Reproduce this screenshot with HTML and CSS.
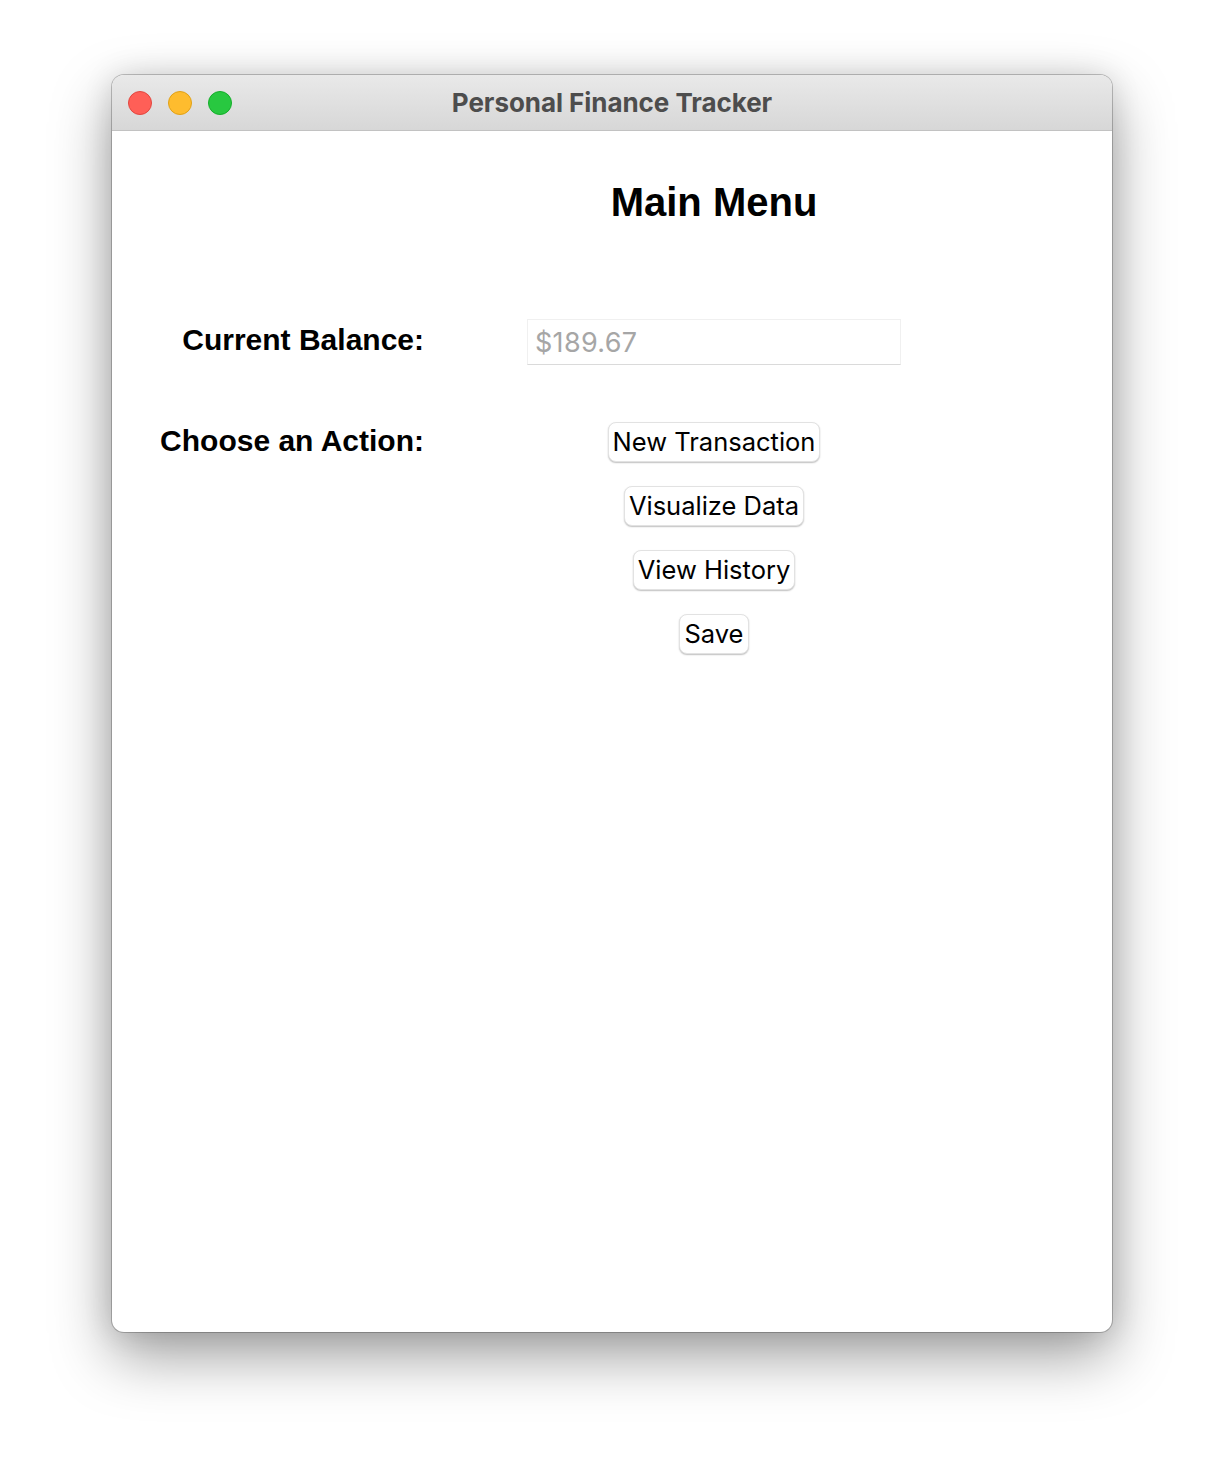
FILE: index.html
```html
<!DOCTYPE html>
<html lang="en">
<head>
<meta charset="utf-8">
<title>Personal Finance Tracker</title>
<link rel="stylesheet" href="styles.css">
</head>
<body>
<div class="window">
  <header class="titlebar">
    <div class="lights">
      <span class="light red"></span>
      <span class="light yellow"></span>
      <span class="light green"></span>
    </div>
    <div class="title">Personal Finance Tracker</div>
    <div class="spacer"></div>
  </header>
  <main class="content">
    <div class="grid">
      <div class="cell"></div>
      <h1 class="heading">Main Menu</h1>
      <div class="label balance-label">Current Balance:</div>
      <div class="field-wrap"><div class="field">$189.67</div></div>
      <div class="label action-label">Choose an Action:</div>
      <div class="actions">
        <button class="btn">New Transaction</button>
        <button class="btn">Visualize Data</button>
        <button class="btn">View History</button>
        <button class="btn">Save</button>
      </div>
    </div>
  </main>
</div>
</body>
</html>
```
FILE: styles.css
```css
html, body {
  margin: 0;
  padding: 0;
  background: #ffffff;
}
body {
  width: 1224px;
  height: 1480px;
  overflow: hidden;
}
.window {
  margin: 75px 0 0 112px;
  width: 1000px;
  height: 1257px;
  border-radius: 12px;
  overflow: hidden;
  background: #ffffff;
  box-shadow: 0 0 0 1px rgba(0,0,0,0.22), 0 24px 60px rgba(0,0,0,0.38), 0 0 30px rgba(0,0,0,0.12);
  display: flex;
  flex-direction: column;
}
.titlebar {
  height: 55px;
  border-bottom: 1px solid #c2c2c2;
  background: linear-gradient(#e9e9e9, #d7d7d7);
  display: grid;
  grid-template-columns: 1fr auto 1fr;
  align-items: center;
  flex-shrink: 0;
}
.lights {
  display: flex;
  gap: 16px;
  padding-left: 16px;
}
.light {
  width: 24px;
  height: 24px;
  border-radius: 50%;
  box-sizing: border-box;
}
.red { background: #ff5f57; border: 1px solid #e2463f; }
.yellow { background: #febc2e; border: 1px solid #e1a116; }
.green { background: #28c840; border: 1px solid #14ae2a; }
.title {
  font-family: Inter, "Noto Sans", sans-serif;
  font-weight: 700;
  font-size: 26px;
  color: #4d4d4d;
  letter-spacing: -0.05px;
}
.content {
  flex: 1;
  padding-top: 49px;
}
.grid {
  display: grid;
  grid-template-columns: 300px 374px;
  column-gap: 103px;
  padding-left: 12px;
  align-items: start;
}
.heading {
  margin: 0;
  font-family: "Liberation Sans", Arial, sans-serif;
  font-weight: 700;
  font-size: 40px;
  line-height: 44px;
  text-align: center;
  color: #000;
  margin-bottom: 95px;
}
.label {
  font-family: "Liberation Sans", Arial, sans-serif;
  font-weight: 700;
  font-size: 30px;
  color: #000;
  text-align: right;
}
.balance-label {
  line-height: 42px;
}
.action-label {
  line-height: 37px;
}
.field-wrap {
  margin-bottom: 57px;
}
.field {
  height: 46px;
  box-sizing: border-box;
  border: 1px solid #f0f0f0;
  border-bottom: 1px solid #dadada;
  padding-left: 7px;
  font-family: Inter, "Noto Sans", sans-serif;
  font-size: 27px;
  letter-spacing: 0.3px;
  line-height: 46px;
  color: #a6a6a6;
}
.actions {
  display: flex;
  flex-direction: column;
  align-items: center;
  gap: 24px;
}
.btn {
  height: 40px;
  padding: 0 4px;
  border: 1px solid #e2e2e2;
  border-radius: 8px;
  background: #ffffff;
  box-shadow: 0 1px 1.5px rgba(0,0,0,0.25);
  font-family: Inter, "Noto Sans", sans-serif;
  font-size: 25.5px;
  color: #000;
  line-height: 38px;
}
```
